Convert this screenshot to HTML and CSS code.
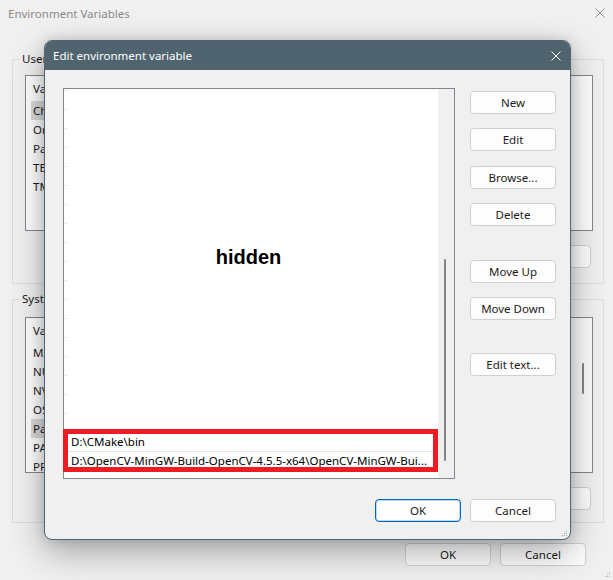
FILE: index.html
```html
<!DOCTYPE html>
<html>
<head>
<meta charset="utf-8">
<title>Edit environment variable</title>
<link rel="stylesheet" href="styles.css">
</head>
<body>
<div class="env">
  <div class="env-title">
    <span>Environment Variables</span>
    <svg class="x-icon" width="10" height="10" viewBox="0 0 10 10"><path d="M0.5 0.5L9.5 9.5M9.5 0.5L0.5 9.5" stroke="#8e8e8e" stroke-width="1" fill="none"/></svg>
  </div>

  <fieldset class="group group-user">
    <legend>User variables for user</legend>
    <div class="vlist">
      <div class="vcol">
        <div class="vhead">Variable</div>
        <div class="vrow sel">ChocolateyLastPathUpdate</div>
        <div class="vrow">OneDrive</div>
        <div class="vrow">Path</div>
        <div class="vrow">TEMP</div>
        <div class="vrow">TMP</div>
      </div>
    </div>
    <div class="btnrow">
      <button class="btn">New...</button>
      <button class="btn">Edit...</button>
      <button class="btn">Delete</button>
    </div>
  </fieldset>

  <fieldset class="group group-sys">
    <legend>System variables</legend>
    <div class="vlist">
      <div class="vcol">
        <div class="vhead">Variable</div>
        <div class="vrow">MAVEN_HOME</div>
        <div class="vrow">NUMBER_OF_PROCESSORS</div>
        <div class="vrow">NVM_HOME</div>
        <div class="vrow">OS</div>
        <div class="vrow sel">Path</div>
        <div class="vrow">PATHEXT</div>
        <div class="vrow">PROCESSOR_ARCHITECTURE</div>
      </div>
      <div class="vscroll"><div class="vthumb"></div></div>
    </div>
    <div class="btnrow">
      <button class="btn">New...</button>
      <button class="btn">Edit...</button>
      <button class="btn">Delete</button>
    </div>
  </fieldset>

  <div class="env-foot">
    <button class="btn">OK</button>
    <button class="btn">Cancel</button>
  </div>

  <svg class="grip env-grip" width="7" height="7" viewBox="0 0 7 7"><path d="M5 1h1v1H5zM3 3h1v1H3zM5 3h1v1H5zM1 5h1v1H1zM3 5h1v1H3zM5 5h1v1H5z" fill="#b4b4b4"/></svg>

  <div class="dlg">
    <div class="dlg-title">
      <span>Edit environment variable</span>
      <svg class="x-icon" width="10" height="10" viewBox="0 0 10 10"><path d="M0.5 0.5L9.5 9.5M9.5 0.5L0.5 9.5" stroke="#ffffff" stroke-width="1" fill="none"/></svg>
    </div>
    <div class="dlg-body">
      <div class="plist">
        <div class="pcontent">
          <div class="pspacer">hidden</div>
          <div class="prow">D:\CMake\bin</div>
          <div class="prow prow-2">D:\OpenCV-MinGW-Build-OpenCV-4.5.5-x64\OpenCV-MinGW-Bui...</div>
        </div>
        <div class="pscroll"><div class="pthumb"></div></div>
        <div class="redbox"></div>
      </div>
      <div class="dlg-btns">
        <button class="btn">New</button>
        <button class="btn gap-14">Edit</button>
        <button class="btn gap-15">Browse...</button>
        <button class="btn gap-14">Delete</button>
        <button class="btn gap-34">Move Up</button>
        <button class="btn gap-14">Move Down</button>
        <button class="btn gap-33">Edit text...</button>
      </div>
    </div>
    <div class="dlg-foot">
      <button class="btn btn-default">OK</button>
      <button class="btn">Cancel</button>
    </div>
    <svg class="grip dlg-grip" width="7" height="7" viewBox="0 0 7 7"><path d="M5 1h1v1H5zM3 3h1v1H3zM5 3h1v1H5zM1 5h1v1H1zM3 5h1v1H3zM5 5h1v1H5z" fill="#a8a8a8"/></svg>
  </div>
</div>
</body>
</html>
```

FILE: styles.css
```css
* { box-sizing: border-box; }

html, body {
  margin: 0;
  padding: 0;
}

body {
  width: 613px;
  height: 580px;
  overflow: hidden;
  background: #f0f0f0;
  font-family: "Noto Sans", "Liberation Sans", sans-serif;
  font-size: 11.5px;
  color: #1b1b1b;
}

.env {
  position: relative;
  width: 613px;
  height: 580px;
  background: #f0f0f0;
}

.env-title {
  height: 26px;
  display: flex;
  align-items: center;
  justify-content: space-between;
  padding: 0 8px 0 8px;
  color: #8a8a8a;
}

.x-icon { display: block; }

/* group boxes */
.group {
  margin: 26px 0 0 12px;
  width: 592px;
  min-width: 0;
  border: 1px solid #dcdcdc;
  padding: 9px 10px 15px 12px;
}

.group legend {
  padding: 0 2px;
  margin-left: -5px;
  line-height: 14px;
  font-size: 11.5px;
  color: #1b1b1b;
}

.group-sys {
  margin-top: 8px;
  padding: 11px 10px 12px 12px;
}

.vlist {
  height: 156px;
  border: 1px solid #828790;
  background: #ffffff;
  display: flex;
  overflow: hidden;
}

.vcol { flex: 1; min-width: 0; }

.vhead {
  height: 25px;
  line-height: 25px;
  padding-left: 7px;
}

.vrow {
  width: 150px;
  height: 19px;
  line-height: 19px;
  margin-left: 5px;
  padding-left: 2px;
  white-space: nowrap;
  overflow: hidden;
  text-overflow: ellipsis;
}

.vrow.sel { background: #dadada; }

.vscroll {
  width: 19px;
  background: #fbfbfb;
}

.vthumb {
  margin: 45px 0 0 9px;
  width: 2px;
  height: 31px;
  border-radius: 1px;
  background: #858585;
}

.btnrow {
  display: flex;
  justify-content: flex-end;
  gap: 9px;
  margin-top: 14px;
  padding-right: 2px;
}

/* buttons */
.btn {
  display: block;
  width: 86px;
  height: 23px;
  margin: 0;
  padding: 0;
  border: 1px solid #d0d0d0;
  border-radius: 4px;
  background: #fdfdfd;
  font: inherit;
  color: #1b1b1b;
  line-height: 21px;
  text-align: center;
}

.btn-default {
  border-color: #0067c0;
  box-shadow: inset 0 0 0 1px rgba(0, 103, 192, 0.25);
}

.env-foot {
  display: flex;
  justify-content: flex-end;
  gap: 9px;
  margin-top: 20px;
  padding-right: 27px;
}

.grip {
  position: absolute;
  display: block;
}

.env-grip { right: 2px; bottom: 2px; }

/* dialog */
.dlg {
  position: absolute;
  left: 44px;
  top: 40px;
  width: 527px;
  height: 500px;
  border: 1px solid #51646f;
  border-radius: 8px;
  background: #f0f0f0;
  overflow: hidden;
  box-shadow: 0 12px 34px rgba(0, 0, 0, 0.32), 0 0 12px rgba(0, 0, 0, 0.14);
}

.dlg-title {
  height: 29px;
  background: #506470;
  color: #ffffff;
  display: flex;
  align-items: center;
  justify-content: space-between;
  padding: 0 9px 0 8px;
}

.dlg-body {
  display: flex;
  padding: 18px 14px 0 18px;
}

.plist {
  position: relative;
  width: 392px;
  height: 391px;
  border: 1px solid #828790;
  background: #ffffff;
  display: flex;
  flex: none;
}

.pcontent {
  flex: 1;
  min-width: 0;
  padding-top: 1px;
  overflow: hidden;
}

.pspacer {
  height: 342px;
  padding-top: 155px;
  padding-right: 5px;
  text-align: center;
  font: bold 20px/24px "Liberation Sans", Arial, sans-serif;
  color: #000000;
  background: linear-gradient(to bottom, #dedede 1px, transparent 1px) 1px 0 / 2px 19px repeat-y;
}

.prow {
  height: 19px;
  line-height: 19px;
  padding-left: 7px;
  white-space: nowrap;
  overflow: hidden;
  color: #000000;
}

.prow-2 { box-shadow: inset 0 1px 0 #e6e6e6; }

.pscroll {
  width: 16px;
  flex: none;
  background: #f0f0f0;
}

.pthumb {
  margin: 170px 0 0 6px;
  width: 2px;
  height: 202px;
  border-radius: 1px;
  background: #858585;
}

.redbox {
  position: absolute;
  left: -1px;
  top: 340px;
  width: 375px;
  height: 43px;
  border: 5px solid #ed1c24;
}

.dlg-btns {
  display: flex;
  flex-direction: column;
  margin-left: 15px;
  padding-top: 3px;
}

.gap-14 { margin-top: 14px; }
.gap-15 { margin-top: 15px; }
.gap-33 { margin-top: 33px; }
.gap-34 { margin-top: 34px; }

.dlg-foot {
  display: flex;
  justify-content: flex-end;
  gap: 9px;
  margin-top: 20px;
  padding-right: 14px;
}

.dlg-grip { right: 2px; bottom: 2px; }
```
